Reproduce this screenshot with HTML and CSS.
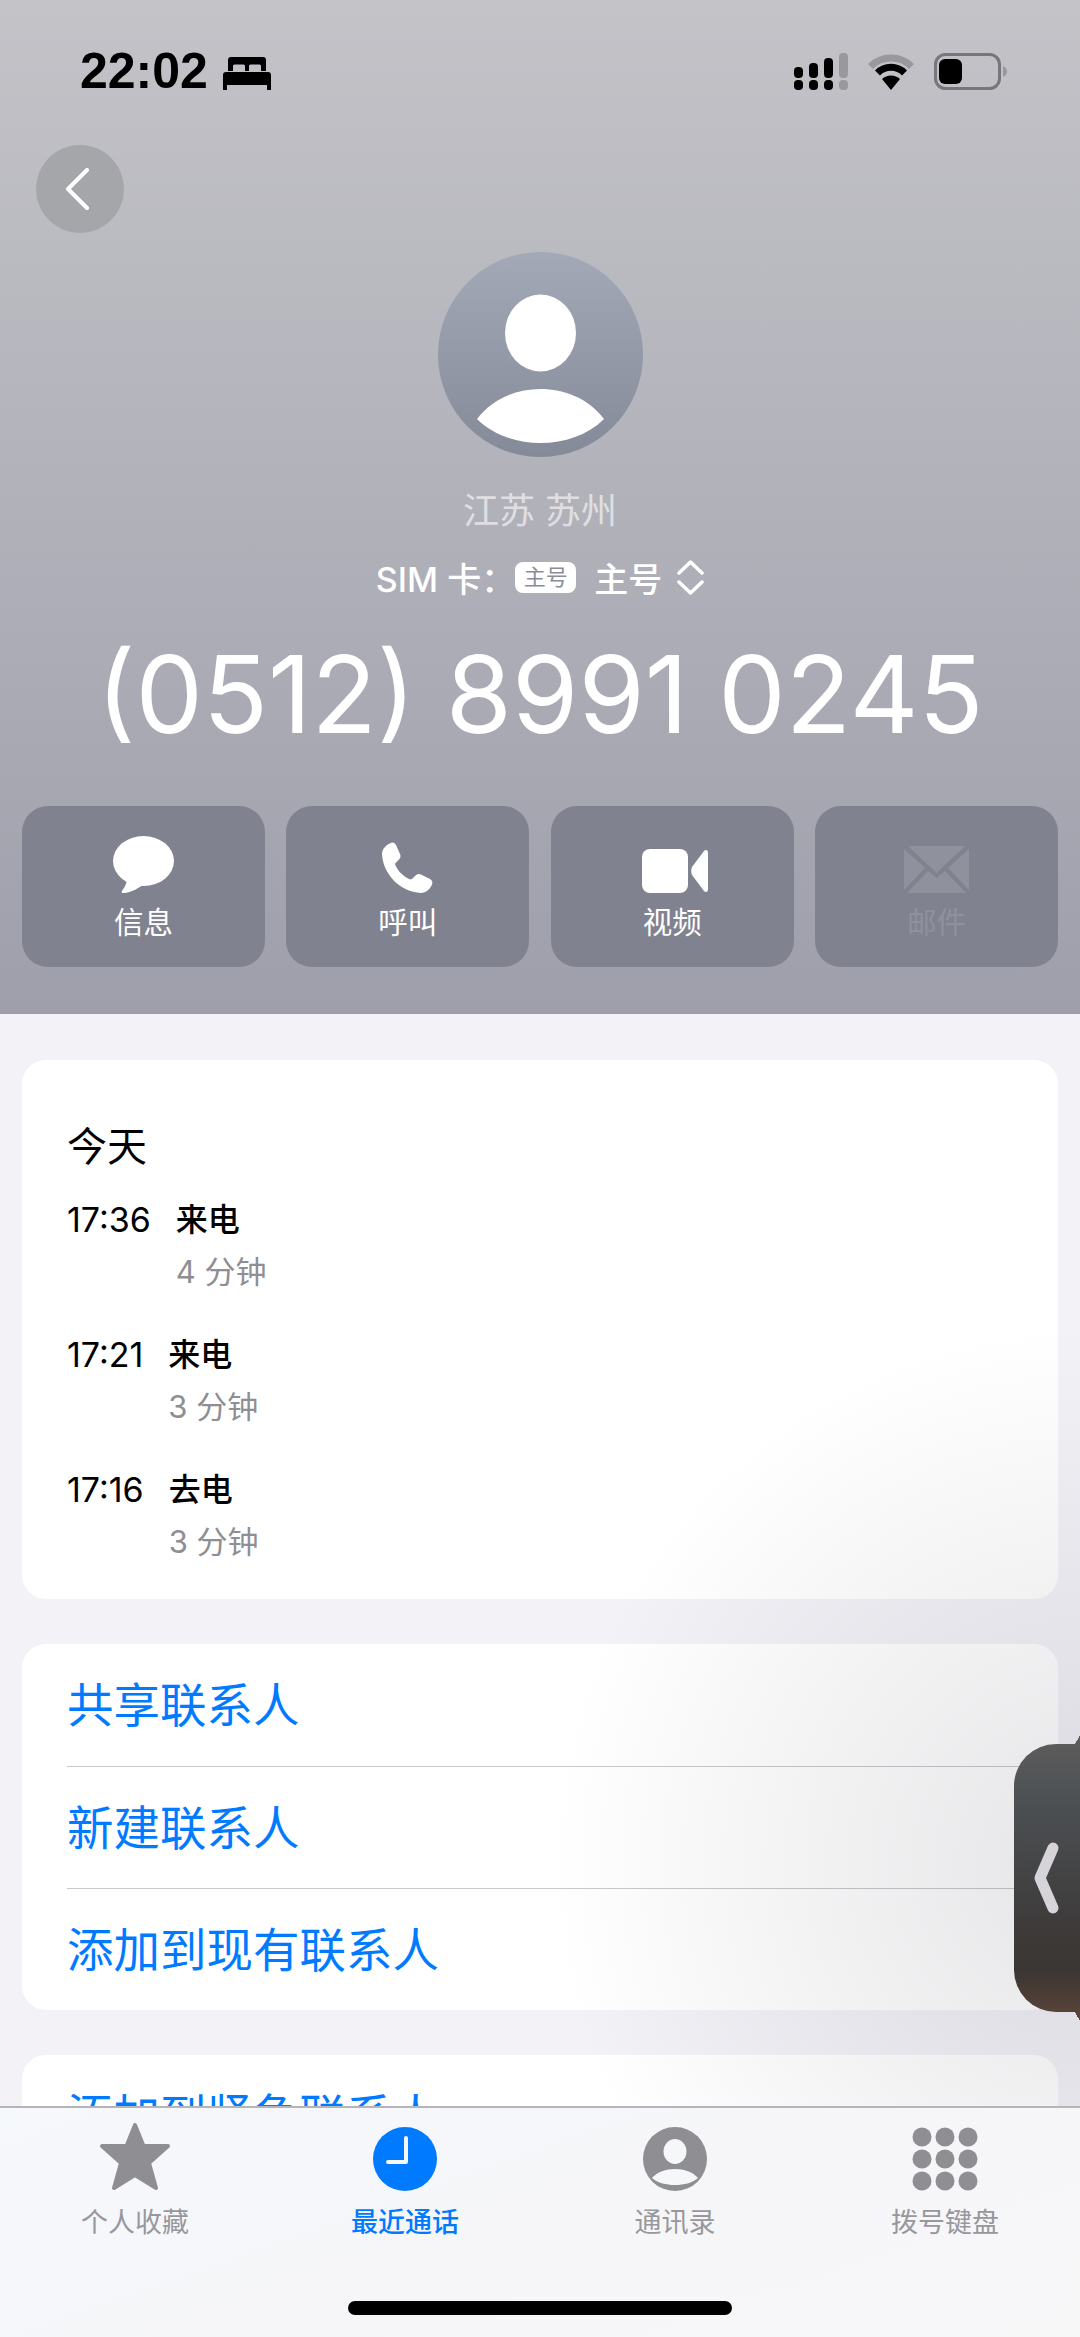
FILE: index.html
```html
<!DOCTYPE html>
<html lang="zh-CN">
<head>
    <meta charset="UTF-8">
    <title>最近通话</title>
    <link rel="stylesheet" href="styles.css">
</head>
<body>
<div class="phone">
    <header class="top">
        <div class="status">
            <div class="status-left">
                <span class="clock">22:02</span>
                <svg class="bed" width="48" height="33" viewBox="0 0 48 33">
                    <path d="M8 0H40C42 0 43 1 43 3V14H38V9C38 8 37 7.500 36 7.500H28C27 7.500 26 8 26 9V14H22V9C22 8 21 7.500 20 7.500H12C11 7.500 10 8 10 9V14H5V3C5 1 6 0 8 0Z"/>
                    <path d="M3 15H45C47 15 48 16 48 18V33H44V28H4V33H0V18C0 16 1 15 3 15Z"/>
                </svg>
            </div>
            <div class="status-right">
                <svg width="54" height="37" viewBox="0 0 54 37">
                    <rect x="0" y="14" width="9" height="11" rx="4"/>
                    <rect x="15" y="10" width="9" height="15" rx="4"/>
                    <rect x="30" y="5" width="9" height="20" rx="4"/>
                    <rect class="dim" x="45" y="0" width="9" height="25" rx="4"/>
                    <rect x="0" y="27" width="9" height="10" rx="4"/>
                    <rect x="15" y="27" width="9" height="10" rx="4"/>
                    <rect x="30" y="27" width="9" height="10" rx="4"/>
                    <rect class="dim" x="45" y="27" width="9" height="10" rx="4"/>
                </svg>
                <svg class="wifi" width="46" height="36" viewBox="0 0 46 36">
                    <path class="arc-dim" d="M2.500 12.500A29 29 0 0 1 43.500 12.500"/>
                    <path class="arc" d="M9.500 19A19 19 0 0 1 36.500 19"/>
                    <path d="M23 36L14 25A13 13 0 0 1 32 25Z"/>
                </svg>
                <svg width="73" height="37" viewBox="0 0 73 37">
                    <rect class="batt" x="1.500" y="1.500" width="64" height="34" rx="10"/>
                    <rect x="5" y="6" width="23" height="25" rx="6"/>
                    <path class="dim" d="M69 13C71.500 14 73 16 73 18.500C73 21 71.500 23 69 24Z"/>
                </svg>
            </div>
        </div>

        <button class="back">
            <svg width="24" height="42" viewBox="0 0 24 42"><path d="M22 2L3 21L22 40"/></svg>
        </button>

        <div class="person">
            <svg class="avatar" width="205" height="205" viewBox="0 0 205 205">
                <defs>
                    <linearGradient id="avatarFill" x1="0" y1="0" x2="0" y2="1">
                        <stop offset="0" stop-color="#a4a9b7"/>
                        <stop offset="1" stop-color="#858a98"/>
                    </linearGradient>
                </defs>
                <circle cx="102.500" cy="102.500" r="102.500" fill="url(#avatarFill)"/>
                <ellipse cx="102.500" cy="81" rx="35.500" ry="38.500" fill="#fff"/>
                <path d="M39 167C55 146 79 137 102.500 137C126 137 150 146 166 167C150 183 126 191 102.500 191C79 191 55 183 39 167Z" fill="#fff"/>
            </svg>
            <div class="region">江苏 苏州</div>
            <div class="sim">
                <span>SIM 卡：</span>
                <span class="sim-badge">主号</span>
                <span>主号</span>
                <svg width="27" height="37" viewBox="0 0 27 37"><path d="M2 14L13.500 3L25 14M2 23L13.500 34L25 23"/></svg>
            </div>
            <div class="number">(0512) 8991 0245</div>
        </div>

        <div class="actions">
            <div class="action">
                <svg width="61" height="57" viewBox="0 0 61 57">
                    <ellipse cx="30.500" cy="25" rx="30.500" ry="25"/>
                    <path d="M14 42C14 48 11 52 9 55C8 57 10 57.500 12 57C19 56 26 52 31 48Z"/>
                </svg>
                <span>信息</span>
            </div>
            <div class="action">
                <svg width="51" height="51" viewBox="0 0 51 51">
                    <path d="M9 1C11 0 13 1 14 3L18 12C19 14 18.500 16 17 17.500L14 20.500C13 21.500 13 22.500 13.500 23.500C16 29 21 34 27 37C28 37.500 29.500 37.500 30.500 36.500L33.500 33.500C35 32 37 31.500 39 32.500L48 37C50 38 51 40 50 42.500C48 47 44 51 39 51C18 50 1 32 0 12C0 7 4 3 9 1Z"/>
                </svg>
                <span>呼叫</span>
            </div>
            <div class="action">
                <svg class="video" width="66" height="44" viewBox="0 0 66 44">
                    <rect x="0" y="0" width="46" height="44" rx="8"/>
                    <path d="M50 18L62 2C64 0 66 1 66 4V40C66 43 64 44 62 42L50 26C49 24 49 20 50 18Z"/>
                </svg>
                <span>视频</span>
            </div>
            <div class="action is-off">
                <svg width="65" height="47" viewBox="0 0 65 47">
                    <path d="M4 0H61L32.500 27Z"/>
                    <path d="M0 3L21 22L0 44Z"/>
                    <path d="M65 3L44 22L65 44Z"/>
                    <path d="M3 47L24 25L32.500 32L41 25L62 47Z"/>
                </svg>
                <span>邮件</span>
            </div>
        </div>
    </header>

    <main class="content">
        <section class="card calls">
            <h2>今天</h2>
            <div class="call">
                <span class="call-time">17:36</span>
                <div class="call-info"><span class="call-type">来电</span><span class="call-len">4 分钟</span></div>
            </div>
            <div class="call">
                <span class="call-time">17:21</span>
                <div class="call-info"><span class="call-type">来电</span><span class="call-len">3 分钟</span></div>
            </div>
            <div class="call">
                <span class="call-time">17:16</span>
                <div class="call-info"><span class="call-type">去电</span><span class="call-len">3 分钟</span></div>
            </div>
        </section>

        <section class="card links">
            <a class="link">共享联系人</a>
            <a class="link">新建联系人</a>
            <a class="link">添加到现有联系人</a>
        </section>

        <section class="card links">
            <a class="link">添加到紧急联系人</a>
        </section>

        <div class="shade"></div>
    </main>

    <div class="side-handle">
        <svg width="30" height="76" viewBox="0 0 30 76"><path d="M20 8L7 38L20 68"/></svg>
    </div>

    <nav class="tabbar">
        <div class="tabs">
            <div class="tab">
                <svg class="star" width="70" height="68" viewBox="0 0 70 68">
                    <path d="M35 2L43.500 23H68L49 40L56 65L35 52L14 65L21 40L2 23H26.500Z"/>
                </svg>
                <span>个人收藏</span>
            </div>
            <div class="tab is-active">
                <svg width="64" height="64" viewBox="0 0 64 64">
                    <circle cx="32" cy="32" r="32"/>
                    <path class="hands" d="M33 11V35H15"/>
                </svg>
                <span>最近通话</span>
            </div>
            <div class="tab">
                <svg width="64" height="64" viewBox="0 0 64 64">
                    <circle cx="32" cy="32" r="32"/>
                    <ellipse class="cut" cx="32" cy="24.500" rx="11.500" ry="12.500"/>
                    <path class="cut" d="M9 51C14 45 23 42 32 42C41 42 50 45 55 51C49 56 41 58 32 58C23 58 15 56 9 51Z"/>
                </svg>
                <span>通讯录</span>
            </div>
            <div class="tab">
                <svg width="66" height="64" viewBox="0 0 66 64">
                    <circle cx="10" cy="10" r="9.500"/><circle cx="33" cy="10" r="9.500"/><circle cx="56" cy="10" r="9.500"/>
                    <circle cx="10" cy="32" r="9.500"/><circle cx="33" cy="32" r="9.500"/><circle cx="56" cy="32" r="9.500"/>
                    <circle cx="10" cy="54" r="9.500"/><circle cx="33" cy="54" r="9.500"/><circle cx="56" cy="54" r="9.500"/>
                </svg>
                <span>拨号键盘</span>
            </div>
        </div>
        <div class="home-bar"></div>
    </nav>
</div>
</body>
</html>
```

FILE: styles.css
```css
* {
    box-sizing: border-box;
}
html, body {
    margin: 0;
    padding: 0;
}
body {
    font-family: Inter, "Noto Sans CJK SC", sans-serif;
    background: #f2f2f7;
}
.phone {
    position: relative;
    width: 1080px;
    height: 2337px;
    overflow: hidden;
    background: #f2f2f7;
}

/* top grey block */
.top {
    height: 1014px;
    background: linear-gradient(#c3c3c8, #9f9fac);
    padding-top: 53px;
}
.status {
    display: flex;
    justify-content: space-between;
    align-items: center;
    height: 37px;
    padding: 0 73px 0 80px;
}
.status-left {
    display: flex;
    align-items: center;
    gap: 15px;
}
.clock {
    font-family: "Liberation Sans", sans-serif;
    font-size: 50px;
    font-weight: 700;
    line-height: 37px;
    color: #000;
}
.bed {
    margin-top: 3px;
}
.status-right {
    display: flex;
    align-items: center;
    gap: 20px;
}
.status-right .dim {
    fill: #98999d;
}
.wifi .arc-dim, .wifi .arc {
    fill: none;
    stroke-width: 7;
}
.wifi .arc-dim {
    stroke: #98999d;
}
.wifi .arc {
    stroke: #000;
}
.batt {
    fill: none;
    stroke: #76767b;
    stroke-width: 3;
}
.back {
    display: flex;
    align-items: center;
    justify-content: center;
    width: 88px;
    height: 88px;
    margin: 55px 0 0 36px;
    padding: 0 6px 0 0;
    border: none;
    border-radius: 50%;
    background: #a5a6aa;
}
.back path {
    fill: none;
    stroke: #fff;
    stroke-width: 4;
    stroke-linecap: round;
    stroke-linejoin: round;
}
.person {
    display: flex;
    flex-direction: column;
    align-items: center;
    margin-top: 19px;
}
.avatar {
    display: block;
}
.region {
    margin-top: 28px;
    font-size: 36px;
    line-height: 52px;
    color: rgba(255, 255, 255, 0.62);
}
.sim {
    display: flex;
    align-items: center;
    height: 50px;
    margin-top: 15px;
    font-size: 34px;
    font-weight: 500;
    color: #fff;
}
.sim-badge {
    width: 61px;
    height: 31px;
    margin: 0 18px 0 0;
    border-radius: 8px;
    background: #fff;
    font-size: 22px;
    font-weight: 400;
    line-height: 31px;
    text-align: center;
    color: #8b8d99;
}
.sim svg {
    margin-left: 15px;
}
.sim svg path {
    fill: none;
    stroke: #fff;
    stroke-width: 3.500;
    stroke-linecap: round;
    stroke-linejoin: round;
}
.number {
    margin-top: 32px;
    font-size: 107px;
    font-weight: 400;
    line-height: 120px;
    white-space: nowrap;
    color: #fff;
}
.actions {
    display: grid;
    grid-template-columns: repeat(4, 1fr);
    gap: 21.500px;
    margin-top: 52px;
    padding: 0 22px;
}
.action {
    display: flex;
    flex-direction: column;
    align-items: center;
    justify-content: flex-end;
    height: 161px;
    padding-bottom: 28px;
    border-radius: 26px;
    background: #80828f;
    font-size: 29.500px;
    line-height: 34px;
    color: #fff;
}
.action svg {
    margin-bottom: 12px;
    fill: #fff;
}
.action .video {
    margin-left: 5px;
}
.action.is-off {
    color: #8f919d;
}
.action.is-off svg {
    fill: #8f919d;
}

/* cards */
.content {
    position: relative;
    display: flex;
    flex-direction: column;
    gap: 45px;
    height: 1323px;
    padding: 46px 22px 0;
}
.card {
    flex: none;
    border-radius: 24px;
    background: #fff;
}
.calls {
    height: 539px;
    padding: 58px 45px 0;
}
.calls h2 {
    margin: 0 0 20px;
    font-size: 40px;
    font-weight: 400;
    line-height: 58px;
    color: #000;
}
.call {
    display: flex;
    gap: 25px;
    height: 135px;
}
.call-time {
    font-size: 34px;
    line-height: 48px;
    color: #000;
}
.call-info {
    display: flex;
    flex-direction: column;
    gap: 4px;
}
.call-type {
    font-size: 32px;
    font-weight: 500;
    line-height: 48px;
    color: #000;
}
.call-len {
    font-size: 31px;
    line-height: 48px;
    color: #8e8e93;
}
.links {
    padding-left: 45px;
}
.link {
    display: block;
    height: 122px;
    font-size: 46.500px;
    line-height: 122px;
    color: #007aff;
    border-top: 1px solid #c9c9cc;
}
.link:first-child {
    border-top: none;
}
/* shadow that the side handle casts */
.shade {
    position: absolute;
    left: 0;
    top: 0;
    width: 1080px;
    height: 1323px;
    pointer-events: none;
    background: radial-gradient(circle 540px at 1090px 850px, rgba(20, 20, 40, 0.11), rgba(20, 20, 40, 0.05) 55%, rgba(20, 20, 40, 0));
}
.side-handle {
    position: absolute;
    right: 0;
    top: 1744px;
    display: flex;
    align-items: center;
    width: 66px;
    height: 268px;
    padding: 0 0 0 19px;
    border-radius: 42px 0 0 42px;
    background: linear-gradient(#5b5b5b, #4c5053 22%, #3d3a39 70%, #3b3633 85%, #574338);
}
.side-handle::before, .side-handle::after {
    content: "";
    position: absolute;
    right: 0;
    width: 5px;
    height: 9px;
}
.side-handle::before {
    top: -9px;
    background: linear-gradient(to top right, transparent 50%, #5b5b5b 50%);
    transform: scaleY(-1);
}
.side-handle::after {
    bottom: -9px;
    background: linear-gradient(to top right, transparent 50%, #574338 50%);
}
.side-handle path {
    fill: none;
    stroke: #d6d4d9;
    stroke-width: 11;
    stroke-linecap: round;
    stroke-linejoin: round;
}

/* bottom tab bar */
.tabbar {
    position: absolute;
    left: 0;
    right: 0;
    bottom: 0;
    height: 231px;
    border-top: 2px solid #b5b5b9;
    background: linear-gradient(160deg, #f5f8fc, #f6f6f8 50%, #f7f7f8);
}
.tabs {
    display: grid;
    grid-template-columns: repeat(4, 270px);
    padding-top: 19px;
}
.tab {
    display: flex;
    flex-direction: column;
    align-items: center;
    font-size: 27px;
    line-height: 34px;
    color: #98989c;
}
.tab svg {
    margin-bottom: 15px;
    fill: #8e8e93;
}
.tab .star {
    margin-top: -4px;
}
.star path {
    stroke: #8e8e93;
    stroke-width: 4;
    stroke-linejoin: round;
}
.tab .cut {
    fill: #f6f7f9;
}
.tab.is-active {
    color: #007aff;
    font-weight: 500;
}
.tab.is-active svg {
    fill: #007aff;
}
.tab .hands {
    fill: none;
    stroke: #f6f7f9;
    stroke-width: 4;
    stroke-linecap: round;
    stroke-linejoin: round;
}
.home-bar {
    position: absolute;
    left: 348px;
    bottom: 22px;
    width: 384px;
    height: 14px;
    border-radius: 7px;
    background: #000;
}
```
